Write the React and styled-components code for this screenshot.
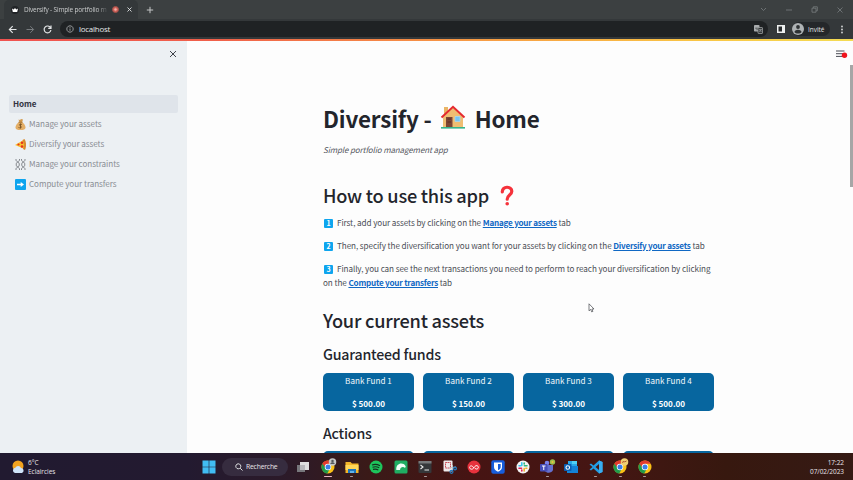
import React from "react";
import styled, { createGlobalStyle } from "styled-components";

const Global = createGlobalStyle`
  * { box-sizing: border-box; }
  html, body { margin: 0; padding: 0; overflow: hidden; }
  body { font-family: "Noto Sans CJK JP", "Source Sans Pro", sans-serif; color: #31333f; }
  h1, h2, h3, p { margin: 0; }
  svg { display: block; flex: none; }
`;

const Screen = styled.div`
  width: 853px; height: 480px; overflow: hidden;
  display: flex; flex-direction: column; background: #fdfdfd;
`;

/* Browser chrome */
const TabStrip = styled.div`
  height: 19px; flex: none; display: flex; align-items: center;
  background: #3c4041; font-family: "Open Sans", "Noto Sans", sans-serif;
`;
const Tab = styled.div`
  width: 134px; height: 19px; margin-left: 4px; padding-left: 7px;
  display: flex; align-items: center; background: #34383a; border-radius: 5px 5px 0 0;
`;
const TabTitle = styled.span`
  width: 85px; margin-left: 5px; white-space: nowrap;
  font-size: 6.5px; line-height: 12px; letter-spacing: -0.17px; color: #c9cbcc;
  mask-image: linear-gradient(90deg, #000 86%, transparent);
`;
const TabTools = styled.div`
  display: flex; align-items: center; gap: 8px; margin-left: 3px;
`;
const NewTab = styled.div`margin-left: 8px;`;
const WindowButtons = styled.div`
  margin-left: auto; padding-right: 10px; height: 17px; display: flex; align-items: center; gap: 19px;
`;
const Toolbar = styled.div`
  height: 20px; flex: none; display: flex; align-items: center; background: #34383a;
  font-family: "Open Sans", "Noto Sans", sans-serif; padding: 0 9px 0 8px;
`;
const Nav = styled.div`display: flex; align-items: center; gap: 8.5px; width: 52px; flex: none;`;
const Address = styled.div`
  width: 708px; height: 16px; border-radius: 8px; background: #1f2224;
  display: flex; align-items: center; padding: 0 5px 0 6px;
`;
const Url = styled.span`
  margin-left: 5px; margin-right: auto; font-size: 7.9px; line-height: 14px;
  letter-spacing: -0.22px; color: #e6e8e9;
`;
const SidePanelIcon = styled.div`margin-left: 9px;`;
const Profile = styled.div`
  margin-left: 7px; width: 38px; height: 14px; border-radius: 7px; background: #24272a;
  display: flex; align-items: center; gap: 4px; font-size: 6.4px; color: #e2e4e5;
`;
const Dots = styled.div`margin-left: auto;`;
const LoadingLine = styled.div`
  height: 2px; flex: none; background: linear-gradient(90deg, #ef5350 0%, #f0604a 25%, #f79a44 55%, #f9c545 82%, #f4dc54 100%);
`;

/* Page */
const Page = styled.div`height: 412px; flex: none; display: flex; overflow: hidden;`;
const Sidebar = styled.aside`width: 187px; flex: none; background: #ecf0f3;`;
const CloseRow = styled.div`
  height: 54px; display: flex; justify-content: flex-end; align-items: flex-start; padding: 9px 10px 0 0;
`;
const NavItem = styled.div`
  height: 18px; margin: 0 9px 2px; padding-left: ${(p) => (p.$active ? 4 : 6)}px;
  border-radius: 2px; display: flex; align-items: center; gap: 3px;
  background: ${(p) => (p.$active ? "#dfe4ea" : "transparent")};
  color: ${(p) => (p.$active ? "#31333f" : "#8a8e94")};
  font-size: 8.1px; font-weight: ${(p) => (p.$active ? 700 : 400)}; line-height: 16px; white-space: nowrap;
  letter-spacing: -0.06px;
`;
const Main = styled.main`flex: 1; padding: 58.5px 0 0 136px; position: relative;`;
const AppMenu = styled.div`position: absolute; top: 8px; right: 5px;`;
const ScrollThumb = styled.div`
  position: absolute; top: 24px; right: 0; width: 3px; height: 122px; background: #a6a6a6;
`;
const Title = styled.h1`
  height: 36px; display: flex; align-items: center; font-size: 22.4px; font-weight: 700;
  white-space: nowrap; letter-spacing: -0.17px; color: #23252c;
`;
const TitleIcon = styled.span`margin: 0 9px 0 8px;`;
const Caption = styled.p`
  margin-top: 6px; height: 15px; line-height: 15px; font-size: 8px; font-style: italic;
  letter-spacing: -0.12px; color: #55575e;
`;
const Heading = styled.h2`
  margin-top: ${(p) => p.$top}px; height: 30px; display: flex; align-items: center; gap: 11px;
  font-size: 18.2px; font-weight: 500; white-space: nowrap; letter-spacing: -0.22px; color: #23252c;
`;
const Subheading = styled.h3`
  margin-top: ${(p) => p.$top}px; height: 20px; line-height: 20px;
  font-size: 14.2px; font-weight: 500; letter-spacing: -0.21px; color: #23252c;
`;
const Steps = styled.div`display: flex; flex-direction: column; gap: 8.5px; margin-top: 5.5px;`;
const Step = styled.p`
  font-size: 8.15px; line-height: 14.5px; letter-spacing: -0.085px; color: #4b4d55; white-space: nowrap;
`;
const Digit = styled.span`
  display: inline-flex; align-items: center; justify-content: center; vertical-align: 0px;
  width: 9px; height: 9px; margin: 0 4px 0 1px; border-radius: 1px;
  background: #0ea5ee; color: #fff; font-size: 7px; font-weight: 700; line-height: 9px;
`;
const Link = styled.a`color: #1068c4; font-weight: 700; letter-spacing: -0.23px; text-decoration: underline;`;
const Cards = styled.div`
  display: grid; grid-template-columns: repeat(4, 91px); column-gap: 9px; margin-top: ${(p) => p.$top}px;
`;
const Card = styled.div`
  height: 38px; border-radius: 5px; background: #07669f; color: #f0f6fa; text-align: center;
  display: flex; flex-direction: column; justify-content: space-between;
  font-size: 8.15px; line-height: 15px;
`;
const Amount = styled.strong`font-weight: 700; color: #fff;`;
const Pointer = styled.div`position: absolute; left: 401px; top: 262px;`;

/* Taskbar */
const Taskbar = styled.div`
  height: 27px; flex: none; display: flex; align-items: center; color: #e8e4e8;
  background: linear-gradient(90deg, #211a30 0%, #231a30 22%, #2c1a28 34%, #3a1a18 43%, #461413 55%, #451613 70%, #37180f 85%, #351a14 100%);
  font-family: "Open Sans", "Noto Sans", sans-serif; padding: 0 9px 0 12px;
`;
const Weather = styled.div`display: flex; align-items: center; gap: 3px; width: 190px; flex: none;`;
const Stack = styled.div`
  display: flex; flex-direction: column; font-size: 6.5px; line-height: 9px; letter-spacing: -0.05px;
  align-items: ${(p) => (p.$end ? "flex-end" : "flex-start")};
`;
const Search = styled.div`
  width: 66px; height: 18px; margin-left: 6px; border-radius: 9px; background: #362c3f;
  display: flex; align-items: center; gap: 3px; padding-left: 13px; font-size: 6.8px; letter-spacing: -0.2px;
`;
const Apps = styled.div`display: flex; align-items: center; margin-left: 3px;`;
const AppSlot = styled.div`
  width: 24.4px; height: 27px; display: flex; flex-direction: column; align-items: center; padding-top: 7px;
`;
const RunningMark = styled.i`
  margin-top: 1.5px; height: 1.5px; border-radius: 1px; width: ${(p) => (p.$wide ? 8 : 3)}px;
  background: ${(p) => (p.$wide ? "#e9b6c0" : "#a99a9c")};
`;
const Clock = styled.div`margin-left: auto;`;

const Stroke = ({ w, h = w, d, c = "#e3e5e6", sw = 1.2, box }) => (
  <svg width={w} height={h} viewBox={box || `0 0 ${w} ${h}`} fill="none" stroke={c} strokeWidth={sw}>
    <path d={d} />
  </svg>
);

const MoneyBag = () => (
  <svg width="11" height="11" viewBox="0 0 22 22">
    <path d="M7 1l3 1 2-2 4 1-2 6H9z" fill="#d39a4c" />
    <path d="M8 6h6c4 3 7 7 7 11 0 4-4 5-10 5S1 21 1 17C1 13 4 9 8 6z" fill="#e3ae66" />
    <path d="M7 6.500h8" stroke="#a06a2a" strokeWidth="1.600" />
    <path d="M14 11c-5-2-7 1-3 3s1 5-4 3M11 9v10" stroke="#6d4a1c" strokeWidth="1.500" fill="none" />
  </svg>
);
const Pizza = () => (
  <svg width="11" height="11" viewBox="0 0 22 22">
    <path d="M0 12L17 2c3 4 4 12 2 18z" fill="#fbc02d" />
    <path d="M15 2l4-2c4 6 4 16 1 22l-4-2c3-6 2-12-1-18z" fill="#d88a2f" />
    <circle cx="7" cy="11" r="2.200" fill="#e53322" /><circle cx="14" cy="7.500" r="2.500" fill="#e53322" />
    <circle cx="14" cy="15" r="2.600" fill="#e53322" />
  </svg>
);
const Chains = () => (
  <svg width="11" height="11" viewBox="0 0 22 22" fill="none" stroke="#85898e" strokeWidth="2">
    <rect x="2.500" y="7" width="6" height="8" rx="2.500" /><rect x="13.500" y="7" width="6" height="8" rx="2.500" />
    <path d="M2 0v2c0 4 7 4 7 0V0M13 0v2c0 4 7 4 7 0V0M2 22v-2c0-4 7-4 7 0v2M13 22v-2c0-4 7-4 7 0v2" />
  </svg>
);
const ArrowBox = () => (
  <svg width="11" height="11" viewBox="0 0 11 11">
    <rect width="11" height="11" rx="1" fill="#0ea5ee" />
    <path d="M2 4.700h3.700V3L9 5.500 5.700 8V6.300H2z" fill="#fff" />
  </svg>
);
const House = () => (
  <svg width="26" height="25" viewBox="0 0 26 25">
    <path d="M4 2h4v9H4z" fill="#e9b566" />
    <path d="M3 11.500L13 2l10 9.500V22H3z" fill="#efbd72" />
    <path d="M1.500 12.500L13 1.800l11.500 10.700" stroke="#e52a2f" strokeWidth="2" fill="none" />
    <path d="M6 12h6.500v10H6z" fill="#7d4534" />
    <path d="M7.500 14h3.500M7.500 17h3.500" stroke="#5c2f25" strokeWidth="1" />
    <path d="M15 11.500h5v5h-5z" fill="#78c5f2" stroke="#a8daf5" strokeWidth=".7" />
    <path d="M1 22h24v1.600H1z" fill="#35b38a" />
  </svg>
);
const Question = () => (
  <svg width="14" height="21" viewBox="0 0 14 21" fill="none" stroke="#f5323b" strokeWidth="3.200">
    <path d="M2.300 7C2 .8 11.800 .8 11.800 6.200c0 4-4.600 3.500-4.600 8" strokeLinecap="round" />
    <circle cx="7.200" cy="18.800" r="1.800" fill="#f5323b" stroke="none" />
  </svg>
);

const Chrome = ({ badge }) => (
  <svg width="14" height="14" viewBox="0 0 28 28" overflow="visible">
    <circle cx="14" cy="14" r="13" fill="#fbc116" />
    <path d="M14 14L2.700 7.500A13 13 0 0 0 12.500 27l5-9z" fill="#229c4b" />
    <path d="M2.700 7.500A13 13 0 0 1 25.300 7.500H14l-5 8z" fill="#e33b2e" />
    <circle cx="14" cy="14" r="6.500" fill="#fff" /><circle cx="14" cy="14" r="5" fill="#3b7ee8" />
    {badge && <circle cx="23" cy="4" r="7.500" fill={badge} />}
    {badge === "#c4c6c7" && <><circle cx="23" cy="2" r="2.500" fill="#54585c" /><path d="M18.500 8c1-5 8-5 9 0z" fill="#54585c" /></>}
    {badge === "#f0cf72" && <path d="M19 6l2-4 2 2 4-2" stroke="#b45c33" strokeWidth="2" fill="none" />}
  </svg>
);
const TaskView = () => (
  <svg width="14" height="14" viewBox="0 0 14 14">
    <path d="M1 5h8v7H1z" fill="#77777c" /><path d="M4 2h9v8H4z" fill="#dededf" /><path d="M4 5h5v5H4z" fill="#b7b7bb" />
  </svg>
);
const Folder = () => (
  <svg width="14" height="14" viewBox="0 0 14 14">
    <path d="M.5 2h5l1.500 1.500h6.500V13H.5z" fill="#f3b52a" /><path d="M.5 5h13v5H.5z" fill="#ffd658" />
    <path d="M3 9h8v4H3z" fill="#1c74bd" /><path d="M5 11h4v2H5z" fill="#63b4ea" />
  </svg>
);
const Spotify = () => (
  <svg width="14" height="14" viewBox="0 0 14 14">
    <circle cx="7" cy="7" r="6.500" fill="#1ec45c" />
    <path d="M3 5q4-1.500 8 .7M3.500 7.300q3.500-1.200 6.700.5M4 9.400q3-.8 5.300.5" stroke="#14301e" strokeWidth="1.100" fill="none" />
  </svg>
);
const Green = () => (
  <svg width="14" height="14" viewBox="0 0 14 14">
    <rect x=".5" y=".5" width="13" height="13" rx="1.500" fill="#20ad62" />
    <path d="M2.300 10C1.700 3 9 1.800 11.500 6c.8 1.500-.8 2.200-1.800 1.200C8.500 6.500 6 7.500 6 10z" fill="#f1fff6" />
  </svg>
);
const Terminal = () => (
  <svg width="14" height="14" viewBox="0 0 14 14">
    <rect x=".5" y="1" width="13" height="12" rx="1" fill="#35373a" /><path d="M.5 1h13v2.500H.5z" fill="#77797b" />
    <path d="M2.500 5l2.500 2-2.500 2M6.500 10H11" stroke="#e9e9e9" strokeWidth="1.100" fill="none" />
  </svg>
);
const Snip = () => (
  <svg width="14" height="14" viewBox="0 0 14 14">
    <rect x=".5" y=".5" width="9" height="11" rx="1" fill="#eeeaeb" />
    <rect x="2.500" y="2.500" width="5" height="5.500" stroke="#c43c45" strokeDasharray="1.500 .5" strokeWidth=".9" fill="none" />
    <path d="M6 8l7-1M9.500 11V5" stroke="#b9bec4" strokeWidth="1" />
    <circle cx="8.500" cy="11.800" r="1.500" stroke="#277dc0" strokeWidth="1.200" fill="none" /><circle cx="12" cy="8.500" r="1.400" stroke="#277dc0" strokeWidth="1.200" fill="none" />
  </svg>
);
const Authy = () => (
  <svg width="14" height="14" viewBox="0 0 14 14">
    <circle cx="7" cy="7" r="6.500" fill="#e7323d" />
    <path d="M7.200 8.200L5.700 6.500C4.500 5.200 2.500 6 2.600 7.600c.3 2 2.700 2 3.700.9L8 6.300c1-1.300 3.300-.8 3.400.9 0 2-2.200 2.400-3.400 1.200" stroke="#fff" strokeWidth=".9" fill="none" />
  </svg>
);
const Bitwarden = () => (
  <svg width="14" height="14" viewBox="0 0 14 14">
    <rect x=".3" y=".3" width="13.400" height="13.400" rx="2" fill="#175ddc" />
    <path d="M3 2.500h8V7c0 2.500-2 3.800-4 4.800-2-1-4-2.300-4-4.800z" fill="#fff" /><path d="M7 4h2.700v3c0 1.500-1.200 2.500-2.700 3.300z" fill="#175ddc" />
  </svg>
);
const Slack = () => (
  <svg width="14" height="14" viewBox="0 0 14 14">
    <circle cx="7" cy="7" r="6.500" fill="#f5f2f2" />
    <g strokeWidth="1.600" strokeLinecap="round">
      <path d="M5.800 2.800v2.700M3 5.800h1.500" stroke="#36c5f0" /><path d="M8.400 5.700h2.600M8.200 3v1" stroke="#2eb67d" />
      <path d="M8.200 8.500V11M9.800 8.200h1" stroke="#ecb22e" /><path d="M3 8.200h2.500M5.800 10v1" stroke="#e01e5a" />
    </g>
  </svg>
);
const Teams = () => (
  <svg width="14" height="14" viewBox="0 0 14 14" overflow="visible">
    <circle cx="7" cy="3" r="2.300" fill="#7b83eb" /><path d="M4 5h9v5c-1 3-6 4-8 1z" fill="#6570cf" />
    <rect x="0" y="4" width="7.500" height="7.500" rx=".8" fill="#464eb8" />
    <path d="M2 6h3.500M3.750 6v4" stroke="#fff" strokeWidth="1" /><circle cx="12.500" cy="2" r="2.700" fill="#9bbf4c" />
    <circle cx="12.500" cy="2" r="1" fill="#f2c33c" />
  </svg>
);
const Outlook = () => (
  <svg width="14" height="14" viewBox="0 0 14 14">
    <path d="M4 1h9v6H4z" fill="#28a8ea" /><path d="M8 1h5v3H8z" fill="#50d0f5" /><path d="M3 6l11 0v7H3z" fill="#1483d8" />
    <rect x="0" y="4" width="7.500" height="7" rx=".8" fill="#0a5fb4" /><circle cx="3.750" cy="7.500" r="1.800" stroke="#fff" strokeWidth="1.100" fill="none" />
  </svg>
);
const VsCode = () => (
  <svg width="14" height="14" viewBox="0 0 14 14">
    <path d="M10 .5l3.500 1.500v10L10 13.500 4.500 8.500 2 10.500.5 9.500 3.500 7 .5 4.500 2 3.500l2.500 2zM10 4L6.500 7 10 10z" fill="#229de5" fillRule="evenodd" />
    <path d="M10 .5l3.500 1.500v10L10 13.500z" fill="#38aef2" />
  </svg>
);

const apps = [
  { I: TaskView }, { I: () => <Chrome badge="#c4c6c7" />, mark: "wide" }, { I: Folder, mark: "dot" },
  { I: Spotify }, { I: Green }, { I: Terminal, mark: "dot" }, { I: Snip }, { I: Authy }, { I: Bitwarden },
  { I: Slack }, { I: Teams, mark: "dot" }, { I: Outlook }, { I: VsCode, mark: "dot" },
  { I: () => <Chrome badge="#f0cf72" />, mark: "dot" }, { I: Chrome, mark: "dot" },
];
const links = [
  { I: MoneyBag, label: "Manage your assets" }, { I: Pizza, label: "Diversify your assets" },
  { I: Chains, label: "Manage your constraints" }, { I: ArrowBox, label: "Compute your transfers" },
];
const funds = [
  { name: "Bank Fund 1", amount: "$ 500.00" }, { name: "Bank Fund 2", amount: "$ 150.00" },
  { name: "Bank Fund 3", amount: "$ 300.00" }, { name: "Bank Fund 4", amount: "$ 500.00" },
];

export default function App() {
  return (
    <Screen>
      <Global />
      <TabStrip>
        <Tab>
          <svg width="8" height="8" viewBox="0 0 8 8"><circle cx="4" cy="4" r="4" fill="#202326" /><path d="M1 2.500l1.700 1L4 2l1.300 1.500 1.700-1L6.200 6H1.800z" fill="#fff" /></svg>
          <TabTitle>Diversify - Simple portfolio m</TabTitle>
          <TabTools>
            <svg width="7" height="7" viewBox="0 0 7 7"><circle cx="3.500" cy="3.500" r="3" fill="#d4655c" stroke="#9b4e49" /><circle cx="3.500" cy="3.500" r="1.200" fill="#f0b0a8" /></svg>
            <Stroke w={5} d="M.5 .5l4 4M4.500 .5l-4 4" sw={0.9} />
          </TabTools>
        </Tab>
        <NewTab><Stroke w={8} d="M4 .8v6.400M.8 4h6.400" c="#c4c6c7" sw={1} /></NewTab>
        <WindowButtons>
          <Stroke w={7} h={5} d="M1 1l2.500 2.500L6 1" c="#797d80" sw={0.8} />
          <Stroke w={6} d="M0 3h6" c="#797d80" sw={0.8} />
          <Stroke w={7} d="M1 2.200h4v4H1zM2.300 2V.8h4v4H5.200" c="#797d80" sw={0.8} />
          <Stroke w={6} d="M.5 .5l5 5M5.500 .5l-5 5" c="#797d80" sw={0.8} />
        </WindowButtons>
      </TabStrip>
      <Toolbar>
        <Nav>
          <Stroke w={9} d="M8.500 4.500H1.500M4.700 1.200L1.400 4.500l3.300 3.300" />
          <Stroke w={9} d="M.5 4.500h7M4.300 1.200l3.300 3.300-3.300 3.300" c="#797d80" sw={1} />
          <Stroke w={9} d="M7.500 2.700A3.400 3.400 0 1 0 7.900 5M8 .5v2.800H5.200" />
        </Nav>
        <Address>
          <Stroke w={8} d="M4 .8a3.200 3.200 0 1 0 .01 0M4 3.500v2.300M4 2v.8" c="#b5b8ba" sw={0.8} />
          <Url>localhost</Url>
          <svg width="9" height="9" viewBox="0 0 9 9"><rect width="5.500" height="6.500" rx=".8" fill="#a9acae" /><path d="M1.300 3.200h2.500v1.500H2.500" stroke="#34383a" strokeWidth=".8" fill="none" /><rect x="4" y="2.500" width="4.500" height="6" rx=".5" fill="#34383a" stroke="#a9acae" strokeWidth=".7" /><path d="M5 4.500h2.700L5.200 7M5.500 5l2 2" stroke="#a9acae" strokeWidth=".6" fill="none" /></svg>
        </Address>
        <SidePanelIcon><svg width="8" height="8" viewBox="0 0 8 8"><path d="M0 0h8v8H0z" fill="#eef0f0" /><path d="M1.500 1.500H5v5H1.500z" fill="#282b2d" /></svg></SidePanelIcon>
        <Profile>
          <svg width="12" height="12" viewBox="0 0 12 12"><circle cx="6" cy="6" r="6" fill="#aeb2b4" /><circle cx="6" cy="4" r="1.900" fill="#2e3234" /><path d="M2.400 9c1-3 6.200-3 7.200 0-1.500 2-5.700 2-7.200 0z" fill="#2e3234" /></svg>
          Invité
        </Profile>
        <Dots><svg width="4" height="9" viewBox="0 0 4 9" fill="#d6d8d9"><circle cx="2" cy="1.500" r=".9" /><circle cx="2" cy="4.500" r=".9" /><circle cx="2" cy="7.500" r=".9" /></svg></Dots>
      </Toolbar>
      <LoadingLine />
      <Page>
        <Sidebar>
          <CloseRow><Stroke w={8} d="M1 1l6 6M7 1L1 7" c="#3f424b" sw={1} /></CloseRow>
          <NavItem $active>Home</NavItem>
          {links.map(({ I, label }) => <NavItem key={label}><I />{label}</NavItem>)}
        </Sidebar>
        <Main>
          <AppMenu>
            <svg width="13" height="10" viewBox="0 0 13 10"><path d="M1 2h8.500M1 4.700h8.500M1 7.400h8.500" stroke="#4a4d55" strokeWidth="1" /><circle cx="9.500" cy="6.300" r="2.700" fill="#f0141e" /></svg>
          </AppMenu>
          <ScrollThumb />
          <Title>Diversify -<TitleIcon><House /></TitleIcon>Home</Title>
          <Caption>Simple portfolio management app</Caption>
          <Heading $top={23.5}>How to use this app<Question /></Heading>
          <Steps>
            <Step><Digit>1</Digit>First, add your assets by clicking on the <Link>Manage your assets</Link> tab</Step>
            <Step><Digit>2</Digit>Then, specify the diversification you want for your assets by clicking on the <Link>Diversify your assets</Link> tab</Step>
            <Step><Digit>3</Digit>Finally, you can see the next transactions you need to perform to reach your diversification by clicking<br />on the <Link>Compute your transfers</Link> tab</Step>
          </Steps>
          <Heading $top={14.5}>Your current assets</Heading>
          <Subheading $top={9}>Guaranteed funds</Subheading>
          <Cards $top={9}>
            {funds.map((f) => <Card key={f.name}><span>{f.name}</span><Amount>{f.amount}</Amount></Card>)}
          </Cards>
          <Subheading $top={12}>Actions</Subheading>
          <Cards $top={8}>{funds.map((f) => <Card key={f.name} />)}</Cards>
          <Pointer>
            <svg width="7" height="10" viewBox="0 0 7 10"><path d="M1 .8v7l1.700-1.400 1 2.500 1.200-.5-1-2.400H6z" fill="#fff" stroke="#44464b" strokeWidth=".7" /></svg>
          </Pointer>
        </Main>
      </Page>
      <Taskbar>
        <Weather>
          <svg width="13" height="14" viewBox="0 0 13 14"><circle cx="6" cy="6" r="5.500" fill="#f2a31f" /><path d="M3 13a2.700 2.700 0 0 1 .3-5.300A3.200 3.200 0 0 1 9 8a2.600 2.600 0 0 1 1 5z" fill="#cfe4f8" /></svg>
          <Stack><span>6°C</span><span>Eclaircies</span></Stack>
        </Weather>
        <svg width="14" height="14" viewBox="0 0 14 14" fill="#41bdf3"><path d="M.5 .5h6.200v6.200H.5zM7.300 .5h6.200v6.200H7.300zM.5 7.300h6.200v6.200H.5zM7.300 7.300h6.200v6.200H7.300z" /></svg>
        <Search><Stroke w={8} d="M3.300 .8a2.500 2.500 0 1 0 .01 0M5.200 5.200l2.300 2.300" sw={1} />Recherche</Search>
        <Apps>
          {apps.map(({ I, mark }, i) => <AppSlot key={i}><I />{mark && <RunningMark $wide={mark === "wide"} />}</AppSlot>)}
        </Apps>
        <Clock><Stack $end><span>17:22</span><span>07/02/2023</span></Stack></Clock>
      </Taskbar>
    </Screen>
  );
}
